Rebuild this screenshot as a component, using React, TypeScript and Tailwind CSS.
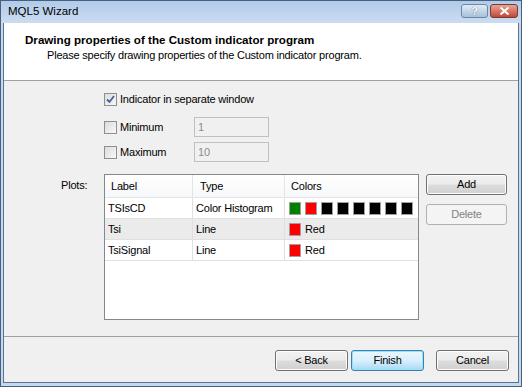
import React from 'react'

const font = { fontFamily: '"Liberation Sans", Arial, sans-serif' }

type Plot = { label: string; type: string; colors: string[]; name?: string }

const plots: Plot[] = [
  {
    label: 'TSIsCD',
    type: 'Color Histogram',
    colors: ['#008000', '#ff0000', '#000000', '#000000', '#000000', '#000000', '#000000', '#000000'],
  },
  { label: 'Tsi', type: 'Line', colors: ['#ff0000'], name: 'Red' },
  { label: 'TsiSignal', type: 'Line', colors: ['#ff0000'], name: 'Red' },
]

function CheckBox({ checked, label }: { checked?: boolean; label: string }) {
  return (
    <div className="flex items-center">
      <span className="flex h-[13px] w-[13px] items-center justify-center border border-[#8e8f8f] bg-gradient-to-br from-[#dcdcdc] to-[#f8f8f8]">
        {checked && (
          <svg width="9" height="9" viewBox="0 0 9 9">
            <path d="M1 4.5 L3.5 7 L8 1" fill="none" stroke="#4a5f97" strokeWidth="1.8" />
          </svg>
        )}
      </span>
      <span className="ml-[3px] text-[11px] tracking-[-0.2px] text-black">{label}</span>
    </div>
  )
}

function WinButton({ children, primary, disabled, className = '' }: { children: React.ReactNode; primary?: boolean; disabled?: boolean; className?: string }) {
  if (disabled) {
    return (
      <div className={`flex items-center justify-center rounded-[3px] border border-[#adb2b5] bg-[#f4f4f4] text-[11px] tracking-[-0.2px] text-[#838383] ${className}`}>
        {children}
      </div>
    )
  }
  return (
    <div
      className={`flex items-center justify-center rounded-[3px] border text-[11px] tracking-[-0.2px] text-black ${
        primary
          ? 'border-[#3c7fb1] bg-gradient-to-b from-[#eaf6fd] via-[#d9f0fc] to-[#a7d9f5] shadow-[inset_0_0_0_1px_#97e1fc]'
          : 'border-[#707070] bg-[linear-gradient(#f2f2f2_0%,#ebebeb_48%,#dddddd_52%,#cfcfcf_100%)] shadow-[inset_0_0_0_1px_#fcfcfc]'
      } ${className}`}
    >
      {children}
    </div>
  )
}

export default function App() {
  return (
    <div className="h-[387px] w-[522px] bg-white" style={font}>
      <div className="flex h-full w-full flex-col border border-[#4a607a] bg-[#c4d8ee]">
        {/* title bar */}
        <div className="flex h-[22px] items-center bg-gradient-to-b from-[#b0cbea] to-[#cbdcf0] px-[2px]">
          <span className="ml-[5px] text-[11.5px] text-black">MQL5 Wizard</span>
          <div className="ml-auto mr-[1px] mt-[3px] flex self-start">
            <div className="flex h-[14px] w-[27px] items-center justify-center rounded-[3px] border border-[#6d86a6] bg-gradient-to-b from-[#e1ebf6] to-[#a9bfd9] text-[11px] font-bold leading-none text-white [text-shadow:0_0_1px_#2f4a6e]">
              ?
            </div>
            <div className="ml-[2px] flex h-[14px] w-[28px] items-center justify-center rounded-[3px] border border-[#7a3a32] bg-gradient-to-b from-[#e6a595] to-[#c1463a]">
              <svg width="11" height="8" viewBox="0 0 11 8">
                <path d="M1.5 0.5 L9.5 7.5 M9.5 0.5 L1.5 7.5" stroke="#fff" strokeWidth="2" />
              </svg>
            </div>
          </div>
        </div>

        {/* client area */}
        <div className="mx-[2px] mb-[3px] flex flex-1 flex-col border-l border-r border-b border-[#5b7290] bg-[#f0f0f0]">
          {/* header */}
          <div className="h-[58px] border-b border-[#a0a0a0] bg-white pl-[21px] pt-[9px]">
            <div className="text-[11.6px] font-bold leading-[16px] text-black">
              Drawing properties of the Custom indicator program
            </div>
            <div className="pl-[22px] text-[11px] leading-[15px] tracking-[-0.2px] text-black">
              Please specify drawing properties of the Custom indicator program.
            </div>
          </div>

          {/* body */}
          <div className="flex h-[255px] flex-col text-[11px] tracking-[-0.2px]">
            <div className="ml-[100px] mt-[12px] flex h-[13px] items-center">
              <CheckBox checked label="Indicator in separate window" />
            </div>

            <div className="ml-[100px] mt-[11px] flex h-[20px] items-center">
              <div className="w-[90px]">
                <CheckBox label="Minimum" />
              </div>
              <div className="flex h-[20px] w-[75px] items-center border border-[#c0c0c0] bg-[#f0f0f0] px-[3px] text-[#8d8d8d]">
                1
              </div>
            </div>

            <div className="ml-[100px] mt-[5px] flex h-[20px] items-center">
              <div className="w-[90px]">
                <CheckBox label="Maximum" />
              </div>
              <div className="flex h-[20px] w-[75px] items-center border border-[#c0c0c0] bg-[#f0f0f0] px-[3px] text-[#8d8d8d]">
                10
              </div>
            </div>

            <div className="mt-[12px] flex">
              <div className="ml-[57px] w-[43px] pt-[3px] text-black">Plots:</div>

              {/* list view */}
              <div className="h-[146px] w-[315px] border border-[#828790] bg-white">
                <div className="flex h-[23px] border-b border-[#e5e5e5] bg-gradient-to-b from-white to-[#f7f8fa]">
                  <div className="flex w-[88px] items-center border-r border-[#e5e5e5] pl-[6px]">Label</div>
                  <div className="flex w-[92px] items-center border-r border-[#e5e5e5] pl-[7px]">Type</div>
                  <div className="flex flex-1 items-center pl-[6px]">Colors</div>
                </div>
                {plots.map((p, i) => (
                  <div
                    key={p.label}
                    className={`flex h-[21px] border-b border-[#e0e0e0] ${i === 1 ? 'bg-[#ebebeb]' : 'bg-white'}`}
                  >
                    <div className="flex w-[88px] items-center border-r border-[#e0e0e0] pl-[3px]">{p.label}</div>
                    <div className="flex w-[92px] items-center border-r border-[#e0e0e0] pl-[3px]">{p.type}</div>
                    <div className="flex flex-1 items-center gap-[4px] pl-[4px]">
                      {p.colors.map((c, j) => (
                        <span
                          key={j}
                          className="h-[13px] w-[12px] border border-[#a0a0a0]"
                          style={{ backgroundColor: c }}
                        />
                      ))}
                      {p.name && <span>{p.name}</span>}
                    </div>
                  </div>
                ))}
              </div>

              <div className="ml-[7px] flex flex-col">
                <WinButton className="h-[21px] w-[81px]">Add</WinButton>
                <WinButton disabled className="mt-[9px] h-[21px] w-[81px]">
                  Delete
                </WinButton>
              </div>
            </div>
          </div>

          {/* footer */}
          <div className="flex flex-1 border-t border-[#a0a0a0] pt-[13px]">
            <div className="ml-[271px] flex h-[21px]">
              <WinButton className="w-[73px]">&lt; Back</WinButton>
              <WinButton primary className="ml-[3px] w-[73px]">
                Finish
              </WinButton>
              <WinButton className="ml-[12px] w-[73px]">Cancel</WinButton>
            </div>
          </div>
        </div>
      </div>
    </div>
  )
}
